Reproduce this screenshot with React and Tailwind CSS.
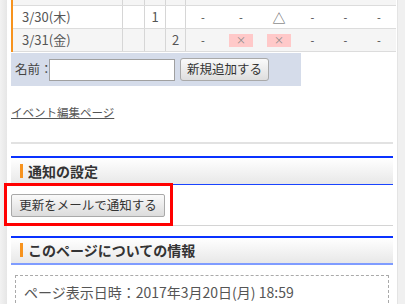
import React from 'react';

const font = { fontFamily: '"Noto Sans CJK JP", "Noto Sans", sans-serif' };

const dashWidths = ['w-[34px]', 'w-[42px]', 'w-[34px]', 'w-[33px]', 'w-[33px]', 'w-[34px]'];

const Mark = ({ v }) => {
  if (v === 'x') {
    return (
      <span className="flex h-[13px] w-[24px] items-center justify-center bg-[#ffc9c9] text-[10px] leading-none text-[#8a8a8a]">
        ×
      </span>
    );
  }
  if (v === 't') {
    return <span className="text-[13px] leading-none text-[#555]">△</span>;
  }
  return <span className="text-[11px] leading-none text-[#444]">-</span>;
};

const Row = ({ date, a, b, c, marks, bg, short }) => (
  <div className={`flex border-b border-[#dcdcdc] ${bg} ${short ? 'h-[6px]' : 'h-[23px]'}`}>
    <div className="flex w-[110px] items-center border-r border-[#d6d6d6] pl-[9px] text-[13px] text-[#555]">
      {date}
    </div>
    <div className="flex w-[22px] items-center justify-center border-r border-[#d6d6d6] text-[13px] text-[#555]">{a}</div>
    <div className="flex w-[21px] items-center justify-center border-r border-[#d6d6d6] text-[13px] text-[#555]">{b}</div>
    <div className="flex w-[20px] items-center justify-center border-r border-[#d6d6d6] text-[13px] text-[#555]">{c}</div>
    {dashWidths.map((w, i) => (
      <div key={i} className={`flex ${w} items-center justify-center`}>
        {!short && <Mark v={marks[i]} />}
      </div>
    ))}
  </div>
);

const SectionHead = ({ title, bottom }) => (
  <div className={`flex h-[29px] items-center border-t-2 border-[#0a32ff] bg-linear-to-b from-white to-[#e8e8e8] pl-[9px] ${bottom}`}>
    <span className="mr-[5px] h-[14px] w-[3px] bg-[#f7931e]" />
    <span className="text-[14px] font-bold text-[#333]">{title}</span>
  </div>
);

export default function App() {
  return (
    <div className="flex h-[304px] w-[405px] overflow-hidden bg-[#efefef]" style={font}>
      <div className="w-[7px] bg-linear-to-r from-[#f2f2f2] to-[#e6e6e6]" />
      <div className="w-[390px] bg-white px-[4px]">
        {/* attendance table */}
        <div className="-mr-[3px] border-l-2 border-[#f7931e]">
          <Row short bg="bg-[#f5f5f5]" marks={[]} />
          <Row date="3/30(木)" b="1" bg="bg-white" marks={['-', '-', 't', '-', '-', '-']} />
          <Row date="3/31(金)" c="2" bg="bg-[#f5f5f5]" marks={['-', 'x', 'x', '-', '-', '-']} />
        </div>

        {/* new entry form */}
        <div className="mt-[1px] flex h-[33px] w-[290px] items-center bg-[#d5dcea]">
          <span className="w-[38px] whitespace-nowrap pl-[4px] text-[12.5px] text-[#444]">名前：</span>
          <input className="relative h-[22px] w-[126px] border border-[#a0a0a0] bg-white outline-none" />
          <button className="ml-[5px] h-[23px] w-[89px] rounded-[3px] border border-[#a9a9a9] bg-linear-to-b from-[#fafafa] to-[#dedede] text-[12.5px] text-[#333]">
            新規追加する
          </button>
        </div>

        <div className="mt-[17px] h-[18px] text-[11.5px] leading-[18px] text-[#555] underline">イベント編集ページ</div>

        <div className="mt-[21px] h-[2px] bg-[#e2e2e2]" />

        <div className="mt-[12px]">
          <SectionHead title="通知の設定" bottom="border-b border-b-[#1a44ff]" />
        </div>

        <div className="relative mt-[6px] w-[154px]">
          <button className="h-[23px] w-[154px] rounded-[2px] border border-[#a9a9a9] bg-linear-to-b from-[#fafafa] to-[#dcdcdc] text-[12.5px] text-[#333]">
            更新をメールで通知する
          </button>
          <div className="absolute -top-[8px] -bottom-[9px] -left-[7px] -right-[8px] border-[3px] border-[#ff0000]" />
        </div>

        <div className="mt-[8px] h-px bg-[#d4d4d4]" />

        <div className="mt-[10px]">
          <SectionHead title="このページについての情報" bottom="border-b-2 border-b-[#7f9cff]" />
        </div>

        <div className="mx-[4px] mt-[10px] border border-dashed border-[#aaa] px-[8px] pt-[6px] text-[14px] leading-[20px] text-[#555]">
          <div>ページ表示日時：2017年3月20日(月) 18:59</div>
          <div>最終更新日時：2017年3月18日(土) 10:21</div>
        </div>
      </div>
      <div className="w-[8px] border-l border-[#e4e4e4] bg-[#f0f0f0]" />
    </div>
  );
}
